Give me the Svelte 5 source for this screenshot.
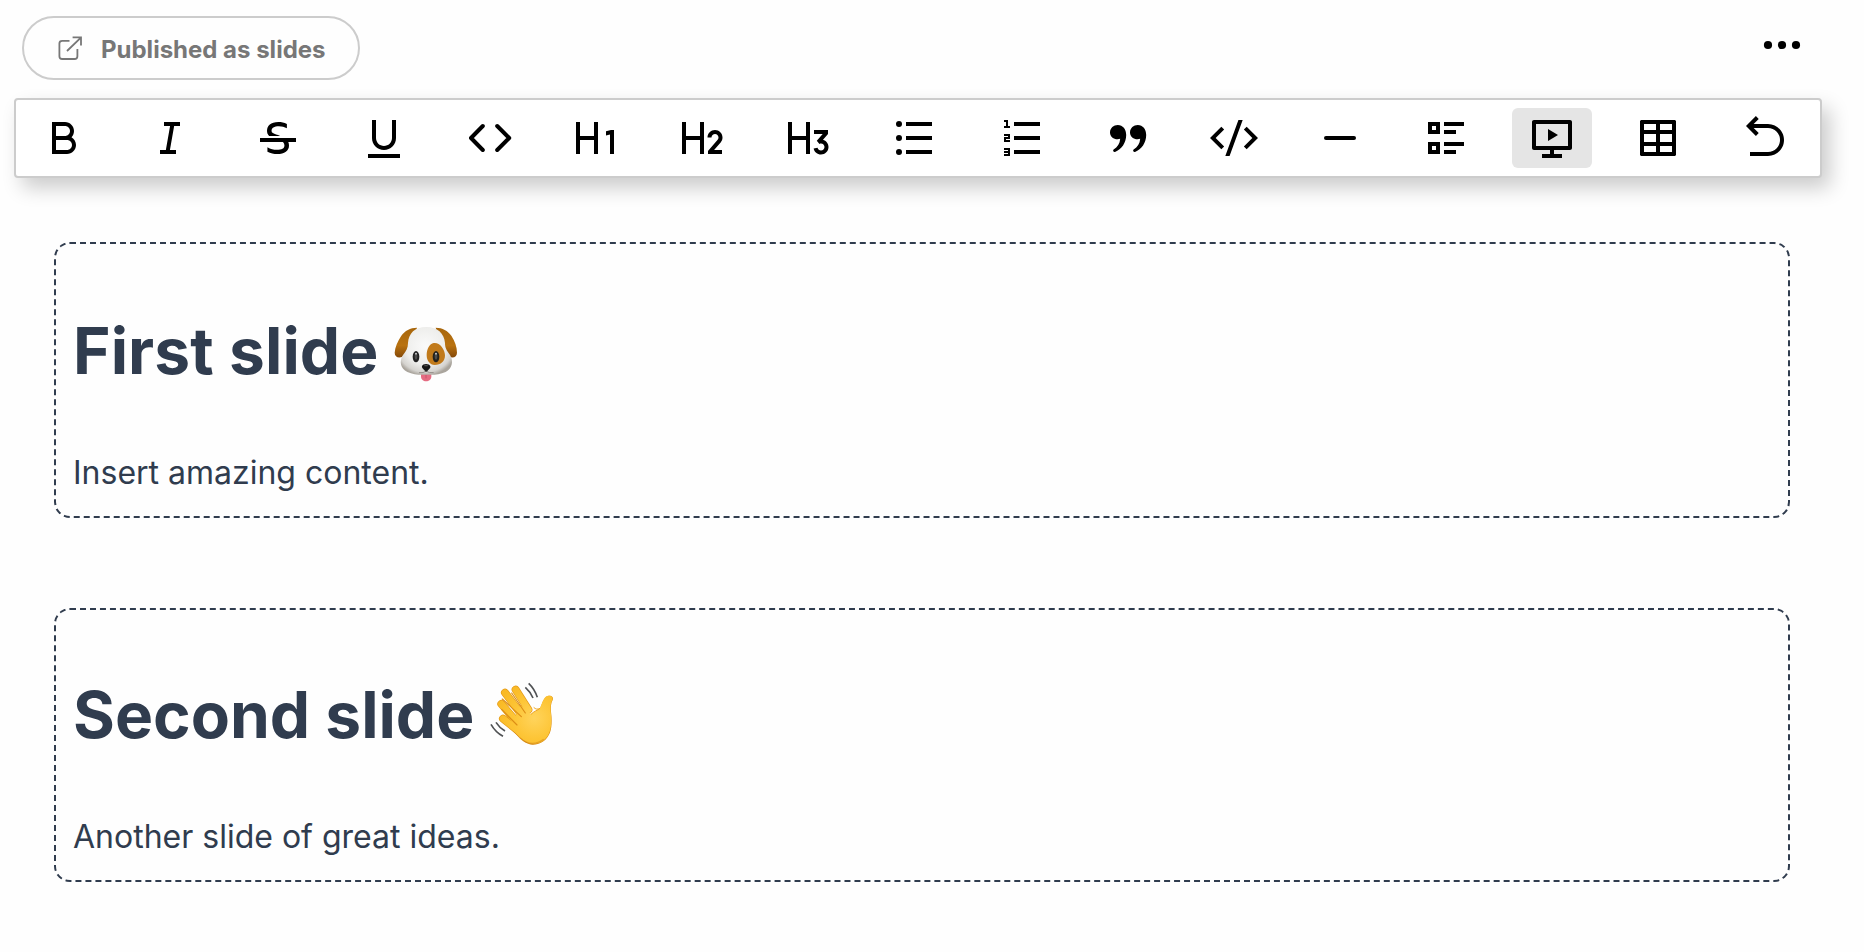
<script>
  const tools = [
    { name: 'Bold', d: 'M8 11H12.5C13.8807 11 15 9.88071 15 8.5C15 7.11929 13.8807 6 12.5 6H8V11ZM18 15.5C18 17.9853 15.9853 20 13.5 20H6V4H12.5C14.9853 4 17 6.01472 17 8.5C17 9.70431 16.5269 10.7981 15.7564 11.6058C17.0979 12.3847 18 13.837 18 15.5ZM8 13V18H13.5C14.8807 18 16 16.8807 16 15.5C16 14.1193 14.8807 13 13.5 13H8Z' },
    { name: 'Italic', d: 'M15 20H7V18H9.92661L12.0425 6H9V4H17V6H14.0734L11.9575 18H15V20Z' },
    { name: 'Strikethrough', wide: true, d: 'M17.1538 14C17.3846 14.5161 17.5 15.0893 17.5 15.7196C17.5 17.0625 16.9762 18.1116 15.9286 18.867C14.8809 19.6223 13.4335 20 11.5862 20C9.94674 20 8.32335 19.6185 6.71592 18.8555V16.6009C8.23538 17.4783 9.7908 17.917 11.3822 17.917C13.9333 17.917 15.2128 17.1846 15.2208 15.7196C15.2208 15.0939 15.0049 14.5598 14.5731 14.1173C14.5339 14.0772 14.4939 14.0381 14.4531 14H3V12H21V14H17.1538ZM13.076 11H7.62908C7.4566 10.8433 7.29616 10.6692 7.14776 10.4778C6.71592 9.92084 6.5 9.24559 6.5 8.45207C6.5 7.21602 6.96583 6.165 7.89749 5.299C8.82916 4.43299 10.2706 4 12.2219 4C13.6934 4 15.1009 4.32808 16.4444 4.98426V7.13591C15.2448 6.44921 13.9293 6.10587 12.4978 6.10587C10.0187 6.10587 8.77917 6.88793 8.77917 8.45207C8.77917 8.87172 8.99709 9.23796 9.43293 9.55079C9.86878 9.86362 10.4066 10.1135 11.0463 10.3004C11.6665 10.4816 12.3431 10.7148 13.076 11Z' },
    { name: 'Underline', d: 'M8 3V12C8 14.2091 9.79086 16 12 16C14.2091 16 16 14.2091 16 12V3H18V12C18 15.3137 15.3137 18 12 18C8.68629 18 6 15.3137 6 12V3H8ZM4 20H20V22H4V20Z' },
    { name: 'Code', stroke: true, d: 'M8.4 6L2.5 12L8.4 18M15.6 6L21.6 12L15.6 18' },
    { name: 'Heading 1', d: 'M13 20H11V13H4V20H2V4H4V11H11V4H13V20ZM21.0005 8V20H19.0005L19 10.204L17 10.74V8.67L19.5005 8H21.0005Z' },
    { name: 'Heading 2', d: 'M4 4V11H11V4H13V20H11V13H4V20H2V4H4ZM18.5 8C20.5711 8 22.25 9.67893 22.25 11.75C22.25 12.6074 21.9623 13.3976 21.4781 14.0292L21.3302 14.2102L18.0343 18H22V20H15L14.9993 18.444L19.8207 12.8981C20.0881 12.5908 20.25 12.1893 20.25 11.75C20.25 10.7835 19.4665 10 18.5 10C17.5818 10 16.8288 10.7071 16.7558 11.6065L16.75 11.75H14.75C14.75 9.67893 16.4289 8 18.5 8Z' },
    { name: 'Heading 3', d: 'M22 8L21.9984 10L19.4934 12.883C21.0823 13.3184 22.25 14.7728 22.25 16.5C22.25 18.5711 20.5711 20.25 18.5 20.25C16.674 20.25 15.1528 18.9449 14.8184 17.2166L16.7821 16.8352C16.9384 17.6413 17.6481 18.25 18.5 18.25C19.4665 18.25 20.25 17.4665 20.25 16.5C20.25 15.5335 19.4665 14.75 18.5 14.75C18.214 14.75 17.944 14.8186 17.7056 14.9403L16.3992 13.3932L19.3484 10H15V8H22ZM4 4V11H11V4H13V20H11V13H4V20H2V4H4Z' },
    { name: 'Bullet list', d: 'M8 4H21V6H8V4ZM8 11H21V13H8V11ZM8 18H21V20H8V18ZM3 5A1.5 1.5 0 1 0 6 5A1.5 1.5 0 1 0 3 5ZM3 12A1.5 1.5 0 1 0 6 12A1.5 1.5 0 1 0 3 12ZM3 19A1.5 1.5 0 1 0 6 19A1.5 1.5 0 1 0 3 19Z' },
    { name: 'Ordered list', wide: true, d: 'M8 4H21V6H8V4ZM5 3V6H6V7H3V6H4V4H3V3H5ZM3 14V11.5H5V11H3V10H6V12.5H4V13H6V14H3ZM5 19.5H3V18.5H5V18H3V17H6V21H3V20H5V19.5ZM8 11H21V13H8V11ZM8 18H21V20H8V18Z' },
    { name: 'Quote', d: 'M6.9 5.5C9.4 5.5 11.1 7.6 11.1 10.5C11.1 14.4 8.8 17.7 5.5 19C4.8 19.2 4.2 18.3 4.8 17.8C6.8 16.6 7.9 14.8 8.1 12.4C5.6 13.2 3 11.6 3 9.2C3 7.1 4.8 5.5 6.9 5.5ZM16.9 5.5C19.4 5.5 21.1 7.6 21.1 10.5C21.1 14.4 18.8 17.7 15.5 19C14.8 19.2 14.2 18.3 14.8 17.8C16.8 16.6 17.9 14.8 18.1 12.4C15.6 13.2 13 11.6 13 9.2C13 7.1 14.8 5.5 16.9 5.5Z' },
    { name: 'Code block', d: 'M24 12L18.3431 17.6569L16.9289 16.2426L21.1716 12L16.9289 7.75736L18.3431 6.34315L24 12ZM2.82843 12L7.07107 16.2426L5.65685 17.6569L0 12L5.65685 6.34315L7.07107 7.75736L2.82843 12ZM9.78845 21H7.66009L14.2116 3H16.3399L9.78845 21Z' },
    { name: 'Divider', stroke: true, d: 'M5 12H19' },
    { name: 'Checklist', d: 'M11 4H21V6H11V4ZM11 8H17V10H11V8ZM11 14H21V16H11V14ZM11 18H17V20H11V18ZM3 4H9V10H3V4ZM5 6V8H7V6H5ZM3 14H9V20H3V14ZM5 16V18H7V16H5Z' },
    { name: 'Slides', active: true, d: 'M13 18V20H17V22H7V20H11V18H3C2.44772 18 2 17.5523 2 17V4C2 3.44772 2.44772 3 3 3H21C21.5523 3 22 3.44772 22 4V17C22 17.5523 21.5523 18 21 18H13ZM4 5V16H20V5H4ZM10 7.5L15 10.5L10 13.5V7.5Z' },
    { name: 'Table', d: 'M3.5 3H20.5L21 3.5V20.5L20.5 21H3.5L3 20.5V3.5ZM5 5V8H11V5ZM13 5V8H19V5ZM5 10V14H11V10ZM13 10V14H19V10ZM5 16V19H11V16ZM13 16V19H19V16Z' },
    { name: 'Undo', wide: true, d: 'M5.82843 6.99955L8.36396 9.53509L6.94975 10.9493L2 5.99955L6.94975 1.0498L8.36396 2.46402L5.82843 4.99955H13C17.4183 4.99955 21 8.58127 21 12.9996C21 17.4179 17.4183 20.9996 13 20.9996H4V18.9996H13C16.3137 18.9996 19 16.3133 19 12.9996C19 9.68584 16.3137 6.99955 13 6.99955H5.82843Z' }
  ];
  const fingers = 'M134 74L172 134M102 83L155 154M91 117L145 180M96 161L150 204';
  const palm = 'M146 120C158 126 170 138 180 148C188 142 204 136 208 128C215 112 220 92 234 92C244 92 248 98 245 105C240 114 239 124 240 140C243 163 244 192 233 211C222 231 203 240 184 239C168 238 152 226 139 212L118 190Z';
</script>

<main>
  <header>
    <button class="published">
      <svg width="24" height="24" viewBox="0 0 24 24" fill="none" stroke="currentColor" stroke-width="1.8" aria-hidden="true">
        <path d="M11.5 4.8H4.2Q1.4 4.8 1.4 7.6V20.2Q1.4 23 4.2 23H16.6Q19.4 23 19.4 20.2V13M14.6 1.4H23V9.6M22.6 1.8L9 15" />
      </svg>
      Published as slides
    </button>
    <button class="more" aria-label="More">
      <svg width="48" height="48" viewBox="0 0 48 48" aria-hidden="true">
        <circle cx="10" cy="24" r="4.1" /><circle cx="24" cy="24" r="4.1" /><circle cx="38" cy="24" r="4.1" />
      </svg>
    </button>
  </header>

  <nav>
    {#each tools as tool}
      <button class="tool" class:active={tool.active} class:wide={tool.wide} aria-label={tool.name}>
        <svg width="48" height="48" viewBox="0 0 24 24" aria-hidden="true">
          <path d={tool.d} class:line={tool.stroke} fill-rule="evenodd" />
        </svg>
      </button>
    {/each}
  </nav>

  <article>
    <section>
      <h1><span class="first">First slide</span>
        <svg class="dog" width="64" height="56" viewBox="42 50 192 168" aria-hidden="true">
          <defs>
            <radialGradient id="fur" cx=".48" cy=".4" r=".62">
              <stop offset="0" stop-color="#fafafa" /><stop offset=".62" stop-color="#eeeeec" /><stop offset=".88" stop-color="#d5d3cf" /><stop offset="1" stop-color="#aaa59d" />
            </radialGradient>
            <linearGradient id="ear" x1="0" x2="0" y1="0" y2="1">
              <stop offset="0" stop-color="#a7660c" /><stop offset=".6" stop-color="#b97210" /><stop offset="1" stop-color="#854908" />
            </linearGradient>
          </defs>
          <path fill="url(#ear)" d="M111 55C90 55 75 64 64 79C53 96 45 113 44 130C44 142 54 147 66 143L88 118ZM167 55C188 55 203 64 214 79C225 96 231 113 231 130C231 142 221 147 209 143L187 118Z" />
          <path fill="#e56c82" d="M123 190H154V201C154 211 147 216 138 216C130 216 123 211 123 201Z" />
          <path stroke="#bd4861" stroke-width="2" d="M138 196V207" />
          <path fill="url(#fur)" d="M139 53C104 53 86 72 84 101C84 116 78 125 69 137C57 155 61 178 82 188C100 196 119 197 139 196C160 197 179 196 197 188C217 178 221 155 210 137C200 123 195 116 195 101C193 72 172 53 139 53Z" />
          <path fill="#c17a1b" d="M161 101C149 103 140 119 140 138C140 154 150 167 164 167C183 167 195 156 195 138C195 119 178 98 161 101Z" />
          <ellipse cx="108" cy="142" rx="10" ry="17" fill="#222" /><ellipse cx="168" cy="142" rx="10" ry="17" fill="#24211c" />
          <ellipse cx="108" cy="141" rx="4" ry="10" fill="#4d4d4d" /><ellipse cx="168" cy="141" rx="4" ry="10" fill="#4d4d4d" />
          <circle cx="108" cy="133" r="2.6" fill="#ddd" /><circle cx="168" cy="133" r="2.6" fill="#ddd" />
          <path fill="#161616" d="M126 171C128 162 148 162 151 171C153 177 145 180 141 187H136C133 180 124 177 126 171Z" />
          <ellipse cx="138" cy="169" rx="6" ry="2" fill="#555" />
          <path d="M117 190Q131 192 138 185Q147 192 161 190" fill="none" stroke="#77716b" stroke-width="2" />
        </svg>
      </h1>
      <p>Insert amazing content.</p>
    </section>

    <section>
      <h1>Second slide
        <svg class="hand" width="64" height="64" viewBox="57 51 192 192" aria-hidden="true">
          <defs>
            <radialGradient id="skin" gradientUnits="userSpaceOnUse" cx="190" cy="160" r="115">
              <stop offset="0" stop-color="#ffd45c" /><stop offset=".55" stop-color="#fdc536" /><stop offset="1" stop-color="#f9b925" />
            </radialGradient>
          </defs>
          <g fill="none" stroke="#e49a18" stroke-width="24" stroke-linecap="round"><path d={fingers} /></g>
          <path d={palm} fill="#d98c13" />
          <g fill="none" stroke="url(#skin)" stroke-width="20" stroke-linecap="round"><path d={fingers} /></g>
          <path d={palm} fill="url(#skin)" transform="translate(3.8 2.4) scale(.98)" />
          <path d="M122 84L163 144M94 102L151 155M92 133L138 180" fill="none" stroke="#dc8e16" stroke-width="3.5" stroke-linecap="round" />
          <path d="M180 148C188 139 198 137 207 130C200 134 194 133 188 127" fill="none" stroke="#eda622" stroke-width="3" />
          <path d="M147 219Q182 250 218 223" fill="none" stroke="#d48918" stroke-width="4" opacity=".55" />
          <path d="M173 55Q191 72 199 97M163 67Q178 80 186 99M60 178Q73 201 96 214M75 172Q85 188 102 198" fill="none" stroke="#505254" stroke-width="5" />
        </svg>
      </h1>
      <p>Another slide of great ideas.</p>
    </section>
  </article>
</main>

<style>
  :global(body) { margin: 0; background: #fefefe; }
  main {
    box-sizing: border-box;
    height: 952px;
    padding: 16px 42px 0 14px;
    font-family: Inter, sans-serif;
    color: #303c4e;
    overflow: hidden;
  }
  button { border: 0; margin: 0; padding: 0; background: none; font-family: inherit; }
  svg { flex: none; }
  header { display: flex; justify-content: space-between; align-items: flex-start; height: 82px; padding: 0 16px 0 8px; box-sizing: border-box; }
  .published {
    display: flex;
    align-items: center;
    gap: 19px;
    box-sizing: border-box;
    width: 338px;
    height: 64px;
    padding: 2px 0 0 34px;
    border: 2px solid #ccc;
    border-radius: 32px;
    color: #777;
    font-size: 24px;
    font-weight: 700;
    white-space: nowrap;
  }
  .published svg { margin-bottom: 2px; }
  .more { display: flex; margin-top: 5px; }
  nav {
    display: flex;
    gap: 26px;
    box-sizing: border-box;
    height: 80px;
    padding: 8px;
    border: 2px solid #ccc;
    border-radius: 4px;
    background: #fff;
    box-shadow: 8px 10px 20px rgba(0, 0, 0, .2);
  }
  .tool { display: flex; flex: none; align-items: center; justify-content: center; width: 80px; height: 60px; border-radius: 6px; }
  .wide { margin-left: 2px; }
  .active { background: #e5e5e5; }
  .line { fill: none; stroke: #000; stroke-width: 2; stroke-linecap: round; stroke-linejoin: round; }
  article { display: flex; flex-direction: column; gap: 90px; padding: 64px 32px 0 40px; }
  section { box-sizing: border-box; height: 276px; padding: 67px 16px 0 17px; border: 2px dashed #303c4e; border-radius: 16px; }
  section + section { height: 274px; padding-top: 65px; }
  h1 { margin: 0; height: 80px; font-size: 64px; line-height: 80px; font-weight: 700; white-space: nowrap; }
  .first { letter-spacing: .1px; }
  h1 svg { vertical-align: -8px; }
  .hand { margin-left: 1px; }
  p { margin: 58px 0 0; font-size: 32px; line-height: 48px; }
</style>
